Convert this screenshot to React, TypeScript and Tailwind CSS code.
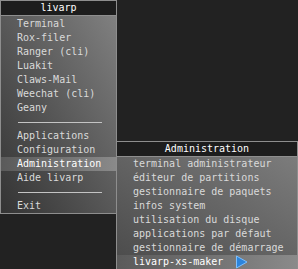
import React from "react";

type Row = { label?: string; sep?: boolean; active?: boolean };

const mainRows: Row[] = [
  { label: "Terminal" },
  { label: "Rox-filer" },
  { label: "Ranger (cli)" },
  { label: "Luakit" },
  { label: "Claws-Mail" },
  { label: "Weechat (cli)" },
  { label: "Geany" },
  { sep: true },
  { label: "Applications" },
  { label: "Configuration" },
  { label: "Administration", active: true },
  { label: "Aide livarp" },
  { sep: true },
  { label: "Exit" },
];

const adminRows: Row[] = [
  { label: "terminal administrateur" },
  { label: "éditeur de partitions" },
  { label: "gestionnaire de paquets" },
  { label: "infos system" },
  { label: "utilisation du disque" },
  { label: "applications par défaut" },
  { label: "gestionnaire de démarrage" },
  { label: "livarp-xs-maker", active: true },
];

const MenuRow = ({ row }: { row: Row }) => {
  if (row.sep) {
    return (
      <div className="h-[14px] flex items-center pl-[17px] pr-[14px]">
        <div className="h-px w-[86px] bg-[#c4c4c4]" />
      </div>
    );
  }
  return (
    <div
      className={
        row.active
          ? "h-[14px] leading-[14px] pl-[16px] text-white bg-gradient-to-r from-[#5a5a5a] to-[#8a8a8a]"
          : "h-[14px] leading-[14px] pl-[16px] text-[#dadada]"
      }
    >
      {row.label}
    </div>
  );
};

const Menu = ({ title, rows, className }: { title: string; rows: Row[]; className: string }) => (
  <div className={className}>
    <div className="h-[16px] leading-[14px] border border-[#8e8e8e] bg-[#1d1d1d] text-white text-center">
      {title}
    </div>
    <div className="border border-t-0 border-[#8e8e8e] bg-gradient-to-bl from-[#808080] to-[#343434]">
      {rows.map((r, i) => (
        <MenuRow key={i} row={r} />
      ))}
    </div>
  </div>
);

export default function App() {
  return (
    <div className="relative w-[298px] h-[269px] overflow-hidden bg-[#222222] text-[10px] whitespace-pre font-['DejaVu_Sans_Mono',monospace]">
      <Menu title="livarp" rows={mainRows} className="w-[117px] [&>div:last-child]:pt-px" />
      <Menu
        title="Administration"
        rows={adminRows}
        className="absolute left-[116px] top-[141px] w-[182px] [&>div:last-child]:from-[#7c7c7c] [&>div:last-child]:to-[#4a4a4a]"
      />
      {/* mouse pointer */}
      <svg className="absolute left-[235px] top-[255px]" width="13" height="14" viewBox="0 0 13 14">
        <polygon points="1.5,1 12,7 1.5,13" fill="#2c84dc" stroke="#7cc0ff" strokeWidth="1" strokeLinejoin="round" />
      </svg>
    </div>
  );
}
